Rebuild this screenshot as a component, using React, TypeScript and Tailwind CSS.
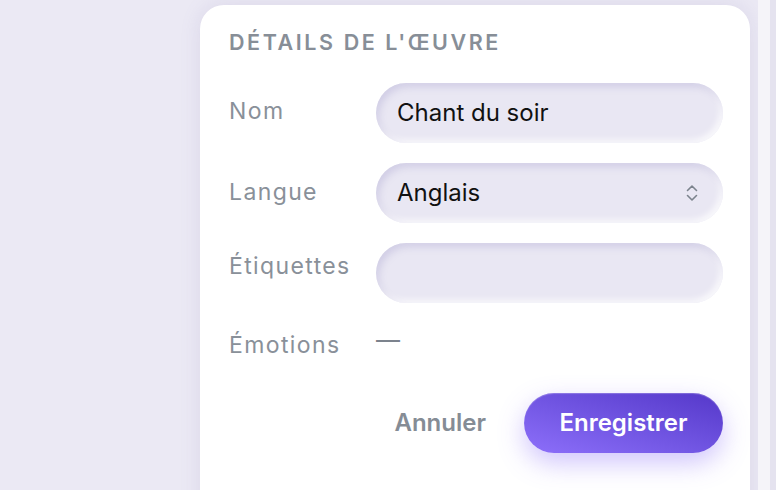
import { ReactNode } from 'react'

const labelCls =
  "text-[23px] leading-[22px] tracking-[0.06em] text-[#899099] font-['Inter',sans-serif]"

function Field({ label, pad, children }: { label: string; pad: string; children: ReactNode }) {
  return (
    <div className="flex items-start">
      <div className={`w-[147px] shrink-0 ${pad}`}>
        <span className={labelCls}>{label}</span>
      </div>
      <div className="flex-1">{children}</div>
    </div>
  )
}

const inputCls =
  'flex h-[60px] w-full items-center rounded-full bg-[#e9e7f3] px-[21px] text-[24px] text-[#111111] shadow-[inset_3px_4px_7px_rgba(140,130,190,0.25),inset_-3px_-3px_6px_rgba(255,255,255,0.8),0_1px_0_rgba(255,255,255,1)]'

export default function App() {
  return (
    <div className="flex h-[490px] w-full overflow-hidden bg-[#ebe9f4] font-['Inter',sans-serif]">
      <div className="w-[200px] shrink-0" />

      <div className="w-[550px] shrink-0 pt-[5px]">
        <div className="h-[540px] rounded-[24px] bg-white pr-[27px] pl-[29px] pt-[24px] shadow-[0_0_20px_rgba(130,120,180,0.16)]">
          <h2 className="mb-[28px] text-[21.5px] leading-[26px] font-semibold uppercase tracking-[0.12em] text-[#878e97]">
            Détails de l'œuvre
          </h2>

          <div className="flex flex-col gap-[20px]">
            <Field label="Nom" pad="pt-[17px]">
              <div className={inputCls}>Chant du soir</div>
            </Field>

            <Field label="Langue" pad="pt-[18px]">
              <div className={`${inputCls} justify-between pr-[25px]`}>
                <span>Anglais</span>
                <svg width="12" height="18" viewBox="0 0 12 18" fill="none" stroke="#7c838d" strokeWidth="1.6" strokeLinecap="round" strokeLinejoin="round">
                  <path d="M1.5 6.5 6 2l4.5 4.5" />
                  <path d="M1.5 11.5 6 16l4.5-4.5" />
                </svg>
              </div>
            </Field>

            <Field label="Étiquettes" pad="pt-[12px]">
              <div className={inputCls} />
            </Field>

            <Field label="Émotions" pad="pt-[11px]">
              <div className="pt-[2px] text-[24px] leading-[30px] text-[#7c838d]">—</div>
            </Field>
          </div>

          <div className="mt-[34px] flex items-center justify-end gap-[14px]">
            <button className="h-[60px] px-[24px] text-[24px] font-semibold text-[#858c95]">
              Annuler
            </button>
            <button className="h-[60px] w-[199px] rounded-full bg-linear-to-tr from-[#8d6ffa] to-[#5537c9] text-[24px] font-semibold text-white shadow-[0_10px_26px_rgba(120,90,245,0.35),inset_0_1px_1px_rgba(255,255,255,0.25)]">
              Enregistrer
            </button>
          </div>
        </div>
      </div>

      <div className="w-[8px] shrink-0" />
      <div className="w-[12px] shrink-0 bg-[#f5f4f9]" />
      <div className="flex-1 bg-[#e5e3ef]" />
    </div>
  )
}
